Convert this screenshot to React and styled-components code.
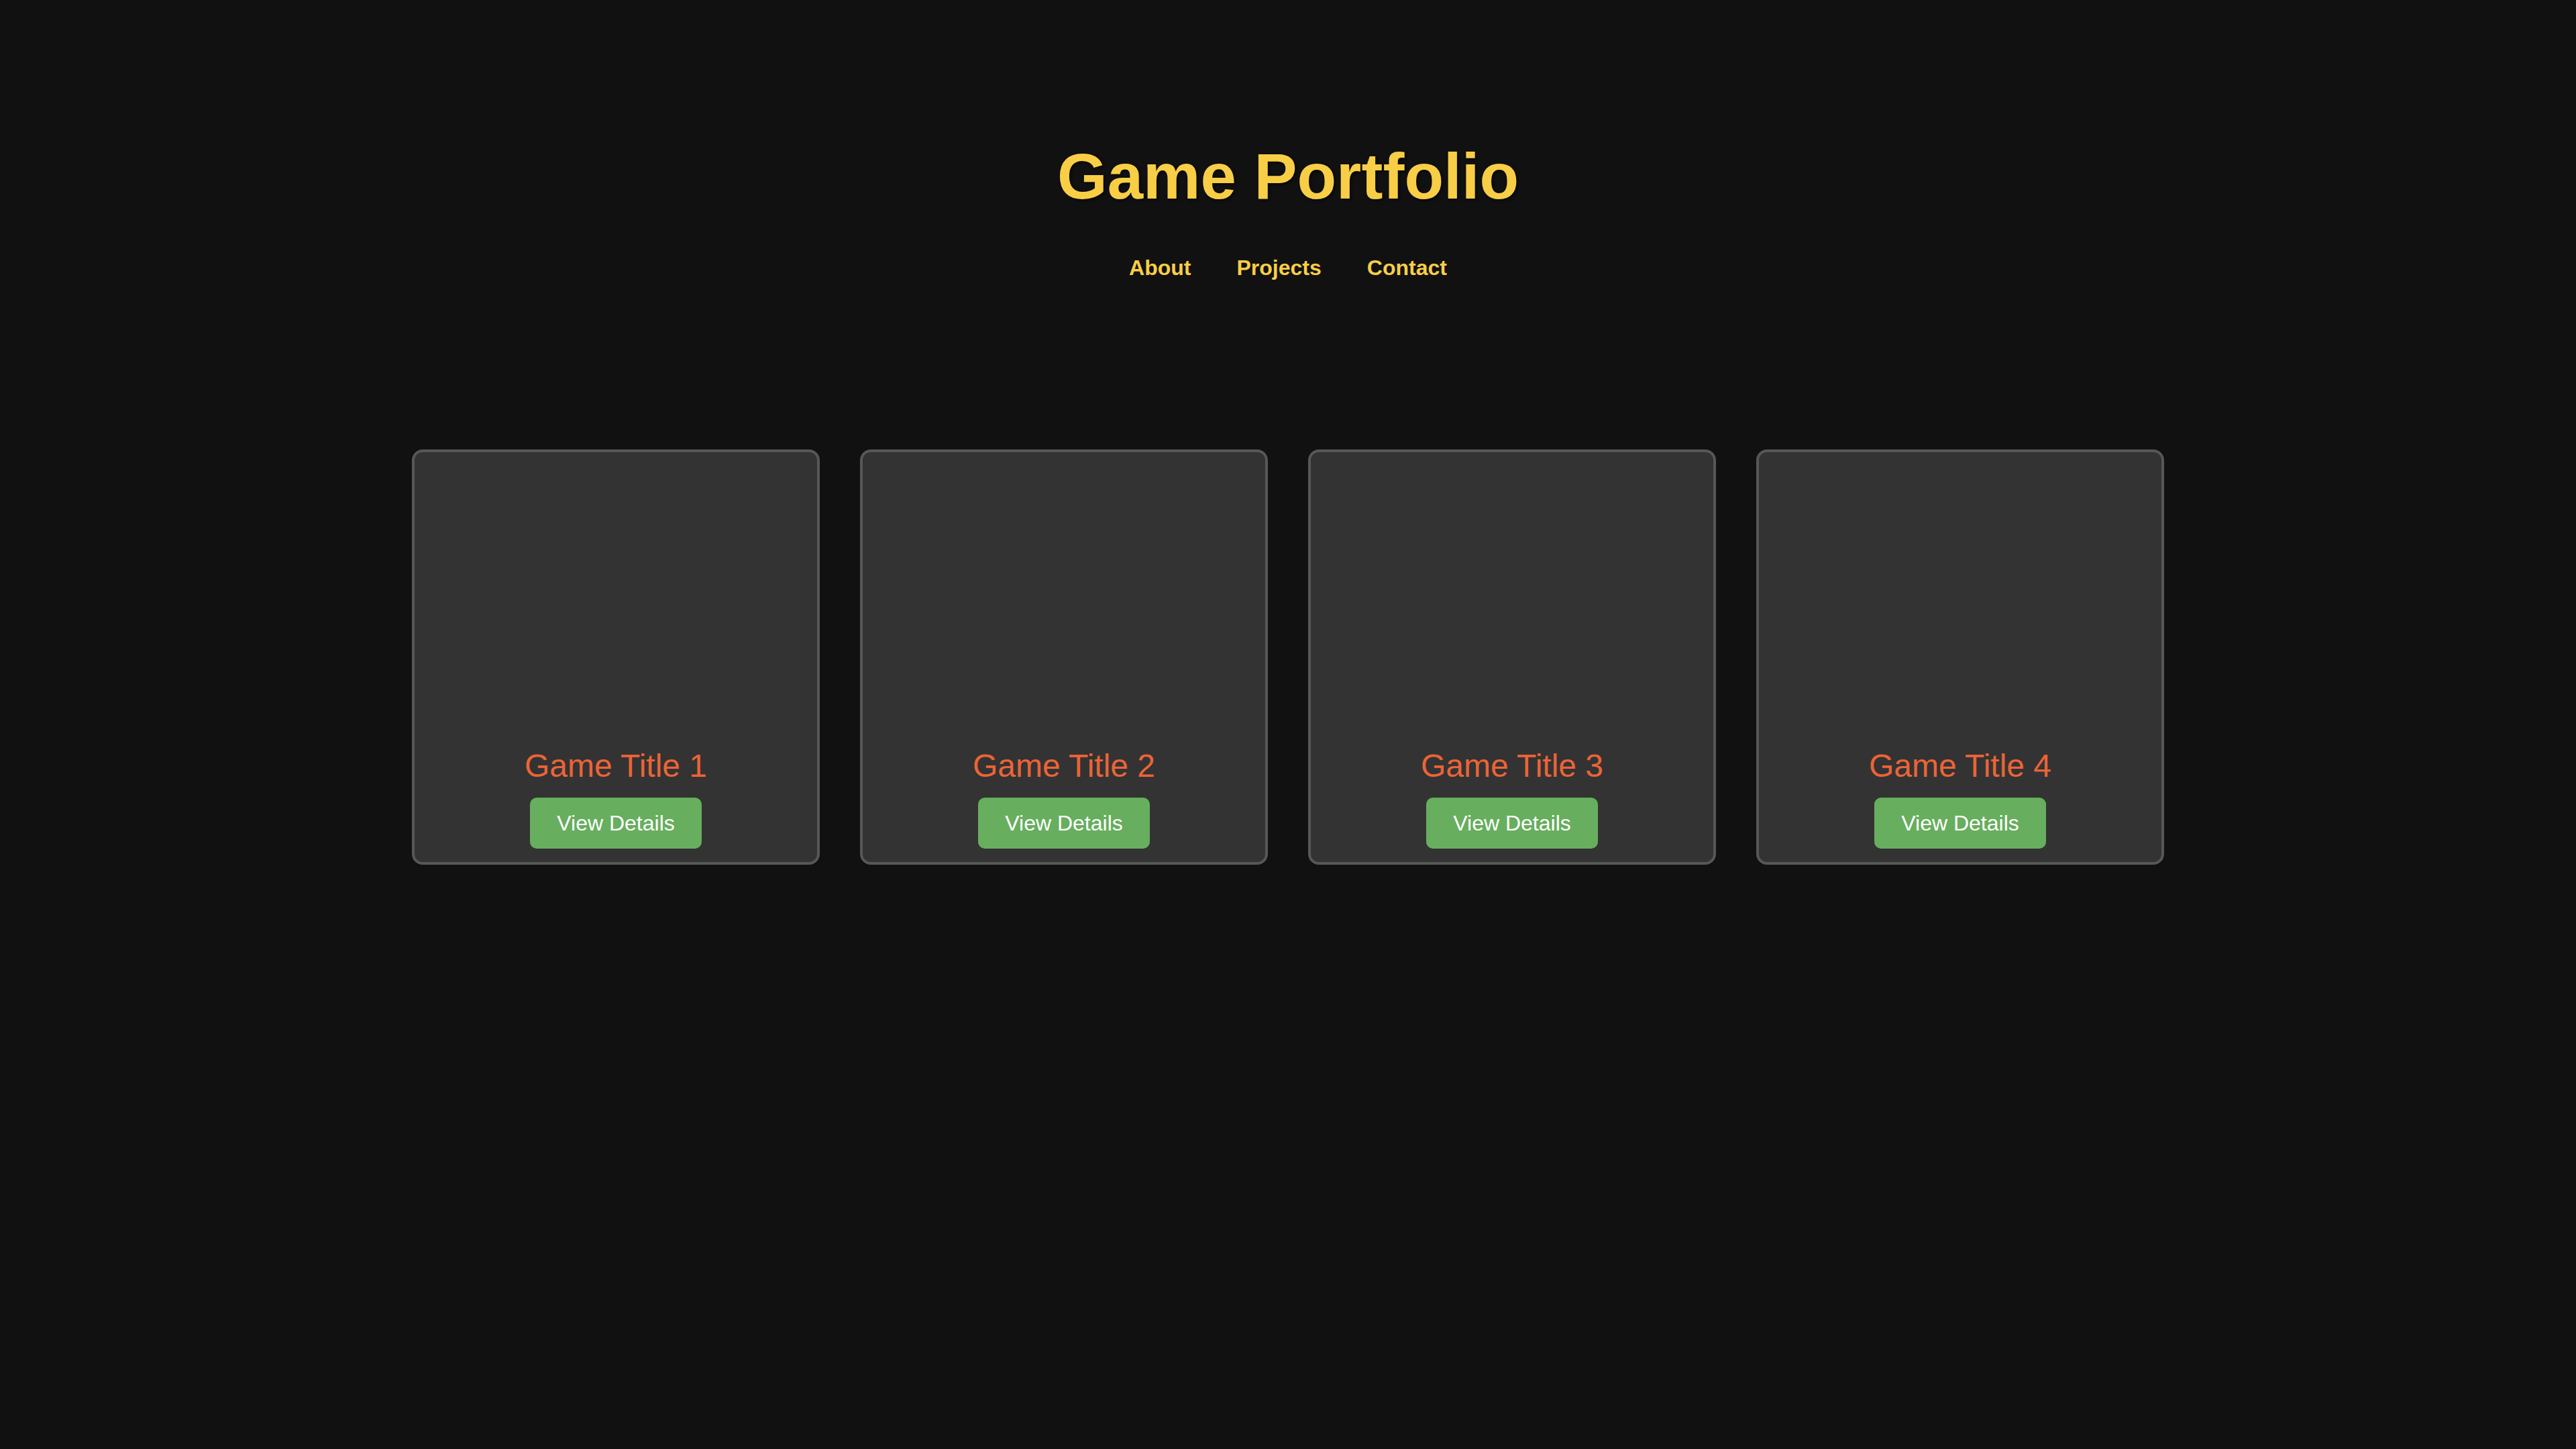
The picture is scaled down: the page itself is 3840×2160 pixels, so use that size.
import React from "react";
import styled, { createGlobalStyle } from "styled-components";

const GlobalStyle = createGlobalStyle`
  html, body {
    margin: 0;
    padding: 0;
    background: #111111;
    font-family: "Liberation Sans", Arial, sans-serif;
  }
`;

const Page = styled.div`
  min-height: 100vh;
  background: #111111;
  color: #f8ce46;
`;

const Header = styled.header`
  padding-top: 208px;
  text-align: center;
`;

const Title = styled.h1`
  margin: 0 0 63px;
  font-size: 96px;
  font-weight: 700;
  color: #f8ce46;
  text-shadow: 2px 2px 4px rgba(0, 0, 0, 0.6);
`;

const Nav = styled.nav`
  display: flex;
  justify-content: center;
  gap: 68px;
`;

const NavLink = styled.a`
  font-size: 32px;
  font-weight: 700;
  color: #f8ce46;
  text-decoration: none;
`;

const Grid = styled.main`
  display: flex;
  justify-content: center;
  gap: 60px;
  padding-top: 252px;
`;

const Card = styled.div`
  box-sizing: border-box;
  width: 608px;
  display: flex;
  flex-direction: column;
  align-items: center;
  padding: 20px;
  background: #333333;
  border: 4px solid #575757;
  border-radius: 16px;
`;

const Cover = styled.div`
  width: 100%;
  height: 400px;
`;

const GameTitle = styled.h3`
  margin: 20px 0;
  font-size: 48px;
  font-weight: 400;
  color: #eb6437;
`;

const DetailsButton = styled.button`
  padding: 20px 40px;
  border: none;
  border-radius: 10px;
  background: #67ae5e;
  color: #ffffff;
  font-family: "Liberation Sans", Arial, sans-serif;
  font-size: 32px;
  line-height: 36px;
  cursor: pointer;
`;

const games = [1, 2, 3, 4];

const App = () => {
  return (
    <Page>
      <GlobalStyle />
      <Header>
        <Title>Game Portfolio</Title>
        <Nav>
          <NavLink href="#about">About</NavLink>
          <NavLink href="#projects">Projects</NavLink>
          <NavLink href="#contact">Contact</NavLink>
        </Nav>
      </Header>
      <Grid>
        {games.map((n) => (
          <Card key={n}>
            <Cover />
            <GameTitle>Game Title {n}</GameTitle>
            <DetailsButton>View Details</DetailsButton>
          </Card>
        ))}
      </Grid>
    </Page>
  );
};

export default App;
